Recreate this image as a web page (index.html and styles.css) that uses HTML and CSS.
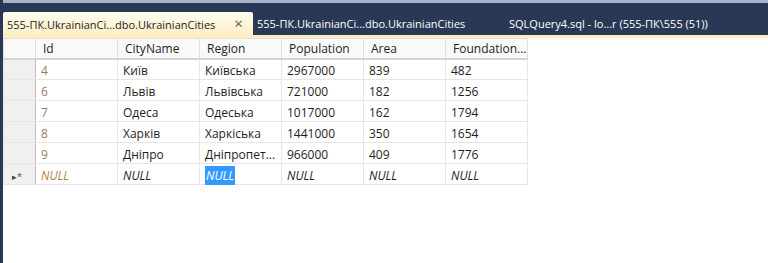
FILE: index.html
```html
<!DOCTYPE html>
<html lang="en">
<head>
    <meta charset="UTF-8">
    <title>555-ПК.UkrainianCities</title>
    <link rel="stylesheet" href="styles.css">
</head>
<body>
    <div class="frame">
        <div class="top-strip"></div>
        <div class="tab-bar">
            <div class="tab active">555-ПК.UkrainianCi...dbo.UkrainianCities <span class="close">&times;</span></div>
            <div class="tab">555-ПК.UkrainianCi...dbo.UkrainianCities</div>
            <div class="tab">SQLQuery4.sql - lo...r (555-ПК\555 (51))</div>
        </div>
        <div class="tab-line"></div>
        <div class="content">
            <table class="grid">
                <tr class="head">
                    <th class="row-head"></th>
                    <th>Id</th>
                    <th>CityName</th>
                    <th>Region</th>
                    <th>Population</th>
                    <th>Area</th>
                    <th>Foundation...</th>
                </tr>
                <tr>
                    <td class="row-head"></td>
                    <td class="id">4</td><td>Київ</td><td>Київська</td><td>2967000</td><td>839</td><td>482</td>
                </tr>
                <tr>
                    <td class="row-head"></td>
                    <td class="id">6</td><td>Львів</td><td>Львівська</td><td>721000</td><td>182</td><td>1256</td>
                </tr>
                <tr>
                    <td class="row-head"></td>
                    <td class="id">7</td><td>Одеса</td><td>Одеська</td><td>1017000</td><td>162</td><td>1794</td>
                </tr>
                <tr>
                    <td class="row-head"></td>
                    <td class="id">8</td><td>Харків</td><td>Харкіська</td><td>1441000</td><td>350</td><td>1654</td>
                </tr>
                <tr>
                    <td class="row-head"></td>
                    <td class="id">9</td><td>Дніпро</td><td>Дніпропет...</td><td>966000</td><td>409</td><td>1776</td>
                </tr>
                <tr class="new-row">
                    <td class="row-head"><span class="marker">&#9656;*</span></td>
                    <td class="id null">NULL</td>
                    <td class="null">NULL</td>
                    <td class="null"><span class="selected">NULL</span></td>
                    <td class="null">NULL</td>
                    <td class="null">NULL</td>
                    <td class="null">NULL</td>
                </tr>
            </table>
        </div>
    </div>
</body>
</html>
```

FILE: styles.css
```css
body {
    margin: 0;
    background: #ffffff;
    font-family: "Open Sans", "Noto Sans", sans-serif;
    font-size: 12px;
}
.frame {
    width: 768px;
    height: 263px;
    border-left: 3px solid #293955; /* dark frame edge */
    box-sizing: border-box;
    display: flex;
    flex-direction: column;
}
.top-strip {
    height: 3px;
    background: #a9b4c8;
}
.tab-bar {
    height: 23px;
    margin-top: 9px;
    display: flex;
    align-items: stretch;
    background: #293955;
    box-shadow: 0 -9px 0 #293955; /* dark band above the tabs */
    font-size: 11px;
}
.tab {
    color: #ffffff;
    padding: 0 0 0 4px;
    line-height: 23px;
    white-space: nowrap;
}
.tab.active {
    width: 246px;
    background: linear-gradient(#fffcf0, #fdeec6);
    color: #1e1e1e;
    border-radius: 2px 2px 0 0;
}
.tab:nth-child(2) {
    width: 248px;
}
.close {
    display: inline-block;
    margin-left: 16px;
    font-size: 15px;
    color: #5a5a5a;
}
.tab-line {
    height: 3px;
    background: #fdeec0;
}
.content {
    flex: 1;
    background: #ffffff;
}
.grid {
    border-collapse: collapse;
    table-layout: fixed;
}
.grid th,
.grid td {
    width: 82px;
    height: 21px;
    padding: 0 0 0 5px;
    text-align: left;
    font-weight: normal;
    color: #1e1e1e;
    border: 1px solid #e6e6e6;
    white-space: nowrap;
    box-sizing: border-box;
}
.grid .head th {
    height: 20px;
    padding: 1px 0 0 7px;
    background: #f9f9f9;
    border-color: #e0e0e0;
    border-bottom: 2px solid #d4d4d4;
}
.grid .row-head {
    width: 32px;
    background: #f0f0f0;
    border-right: 1px solid #bcbcbc;
}
.grid tr:not(.head) td {
    padding-top: 2px;
}
.grid .id {
    color: #9a7a5e;
}
.grid .null {
    font-style: italic;
}
.grid .id.null {
    color: #b08540;
}
.selected {
    background: #3399ff;
    color: #ffffff;
    padding: 1px 1px;
}
.marker {
    font-size: 9px;
    color: #444444;
    padding-left: 3px;
}
```
